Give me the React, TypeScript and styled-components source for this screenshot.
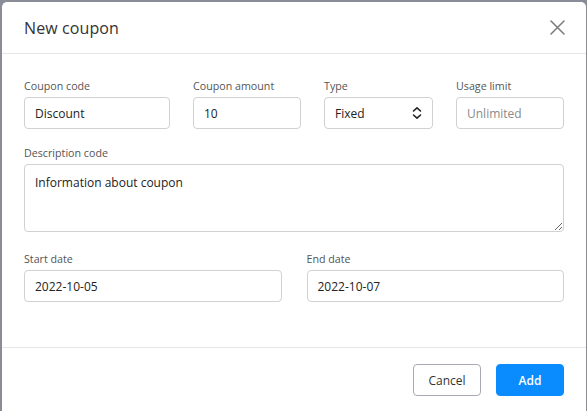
import React from "react";
import styled, { createGlobalStyle } from "styled-components";

const Global = createGlobalStyle`
  html, body { margin: 0; padding: 0; background: #8a8d98; }
  body { font-family: "Open Sans", "Noto Sans", Arial, sans-serif; overflow: hidden; }
  * { box-sizing: border-box; }
`;

const Modal = styled.div`
  margin: 2px 1px 0 2px;
  background: #fff;
  border-radius: 5px 5px 0 0;
  display: flex;
  flex-direction: column;
`;

const Header = styled.div`
  height: 52px;
  border-bottom: 1px solid #e6e6e6;
  display: flex;
  align-items: center;
  justify-content: space-between;
  padding: 0 20px 0 22px;
`;

const Title = styled.h2`
  margin: 0;
  font-size: 16px;
  font-weight: 500;
  color: #333;
  letter-spacing: 0.1px;
`;

const CloseButton = styled.button`
  border: none;
  background: none;
  padding: 0;
  width: 18px;
  height: 18px;
  display: flex;
  align-items: center;
  justify-content: center;
  cursor: pointer;
`;

const Body = styled.div`
  height: 293px;
  padding: 24px 22px 0 22px;
  display: flex;
  flex-direction: column;
`;

const Row = styled.div<{ $cols: string; $gap: number; $top?: number }>`
  display: grid;
  grid-template-columns: ${(p) => p.$cols};
  column-gap: ${(p) => p.$gap}px;
  margin-top: ${(p) => p.$top ?? 0}px;
`;

const Field = styled.label<{ $top?: number }>`
  display: flex;
  flex-direction: column;
  gap: 3px;
  margin-top: ${(p) => p.$top ?? 0}px;
`;

const Label = styled.span`
  font-size: 10.7px;
  line-height: 16px;
  color: #555;
`;

const Input = styled.input`
  height: 32px;
  width: 100%;
  border: 1px solid #d0d0d5;
  border-radius: 4px;
  padding: 0 10px;
  font-family: inherit;
  font-size: 12px;
  color: #222;
  background: #fff;
  outline: none;
  &::placeholder { color: #8a8a8a; }
`;

const SelectBox = styled.div`
  height: 32px;
  border: 1px solid #d0d0d5;
  border-radius: 4px;
  padding: 0 10px;
  display: flex;
  align-items: center;
  justify-content: space-between;
  font-size: 12px;
  color: #222;
`;

const TextArea = styled.textarea`
  height: 68px;
  width: 100%;
  border: 1px solid #d0d0d5;
  border-radius: 4px;
  padding: 9px 10px;
  font-family: inherit;
  font-size: 12px;
  color: #222;
  resize: vertical;
  outline: none;
  display: block;
`;

const Footer = styled.div`
  border-top: 1px solid #e6e6e6;
  padding: 16px 22px;
  display: flex;
  justify-content: flex-end;
  gap: 15px;
`;

const Button = styled.button<{ $primary?: boolean }>`
  height: 32px;
  min-width: 68px;
  padding: 0 14px;
  border-radius: 4px;
  font-family: inherit;
  font-size: 12px;
  font-weight: ${(p) => (p.$primary ? 600 : 400)};
  color: ${(p) => (p.$primary ? "#fff" : "#333")};
  background: ${(p) => (p.$primary ? "#0a8cff" : "#fff")};
  border: 1px solid ${(p) => (p.$primary ? "#0a8cff" : "#a9a9b6")};
  cursor: pointer;
`;

export default function App() {
  return (
    <>
      <Global />
      <Modal>
        <Header>
          <Title>New coupon</Title>
          <CloseButton aria-label="Close">
            <svg width="15" height="15" viewBox="0 0 15 15">
              <path d="M1 1L14 14M14 1L1 14" stroke="#7a7a7a" strokeWidth="1.5" strokeLinecap="round" />
            </svg>
          </CloseButton>
        </Header>
        <Body>
          <Row $cols="146px 108px 109px 108px" $gap={23}>
            <Field>
              <Label>Coupon code</Label>
              <Input defaultValue="Discount" />
            </Field>
            <Field>
              <Label>Coupon amount</Label>
              <Input defaultValue="10" />
            </Field>
            <Field>
              <Label>Type</Label>
              <SelectBox>
                <span>Fixed</span>
                <svg width="10" height="14" viewBox="0 0 10 14">
                  <path d="M1.5 5L5 1.8L8.5 5M1.5 9L5 12.2L8.5 9" stroke="#222" strokeWidth="1.6" fill="none" strokeLinecap="round" strokeLinejoin="round" />
                </svg>
              </SelectBox>
            </Field>
            <Field>
              <Label>Usage limit</Label>
              <Input placeholder="Unlimited" />
            </Field>
          </Row>
          <Field $top={16}>
            <Label>Description code</Label>
            <TextArea defaultValue="Information about coupon" />
          </Field>
          <Row $cols="1fr 1fr" $gap={25} $top={19}>
            <Field>
              <Label>Start date</Label>
              <Input defaultValue="2022-10-05" />
            </Field>
            <Field>
              <Label>End date</Label>
              <Input defaultValue="2022-10-07" />
            </Field>
          </Row>
        </Body>
        <Footer>
          <Button>Cancel</Button>
          <Button $primary>Add</Button>
        </Footer>
      </Modal>
    </>
  );
}
